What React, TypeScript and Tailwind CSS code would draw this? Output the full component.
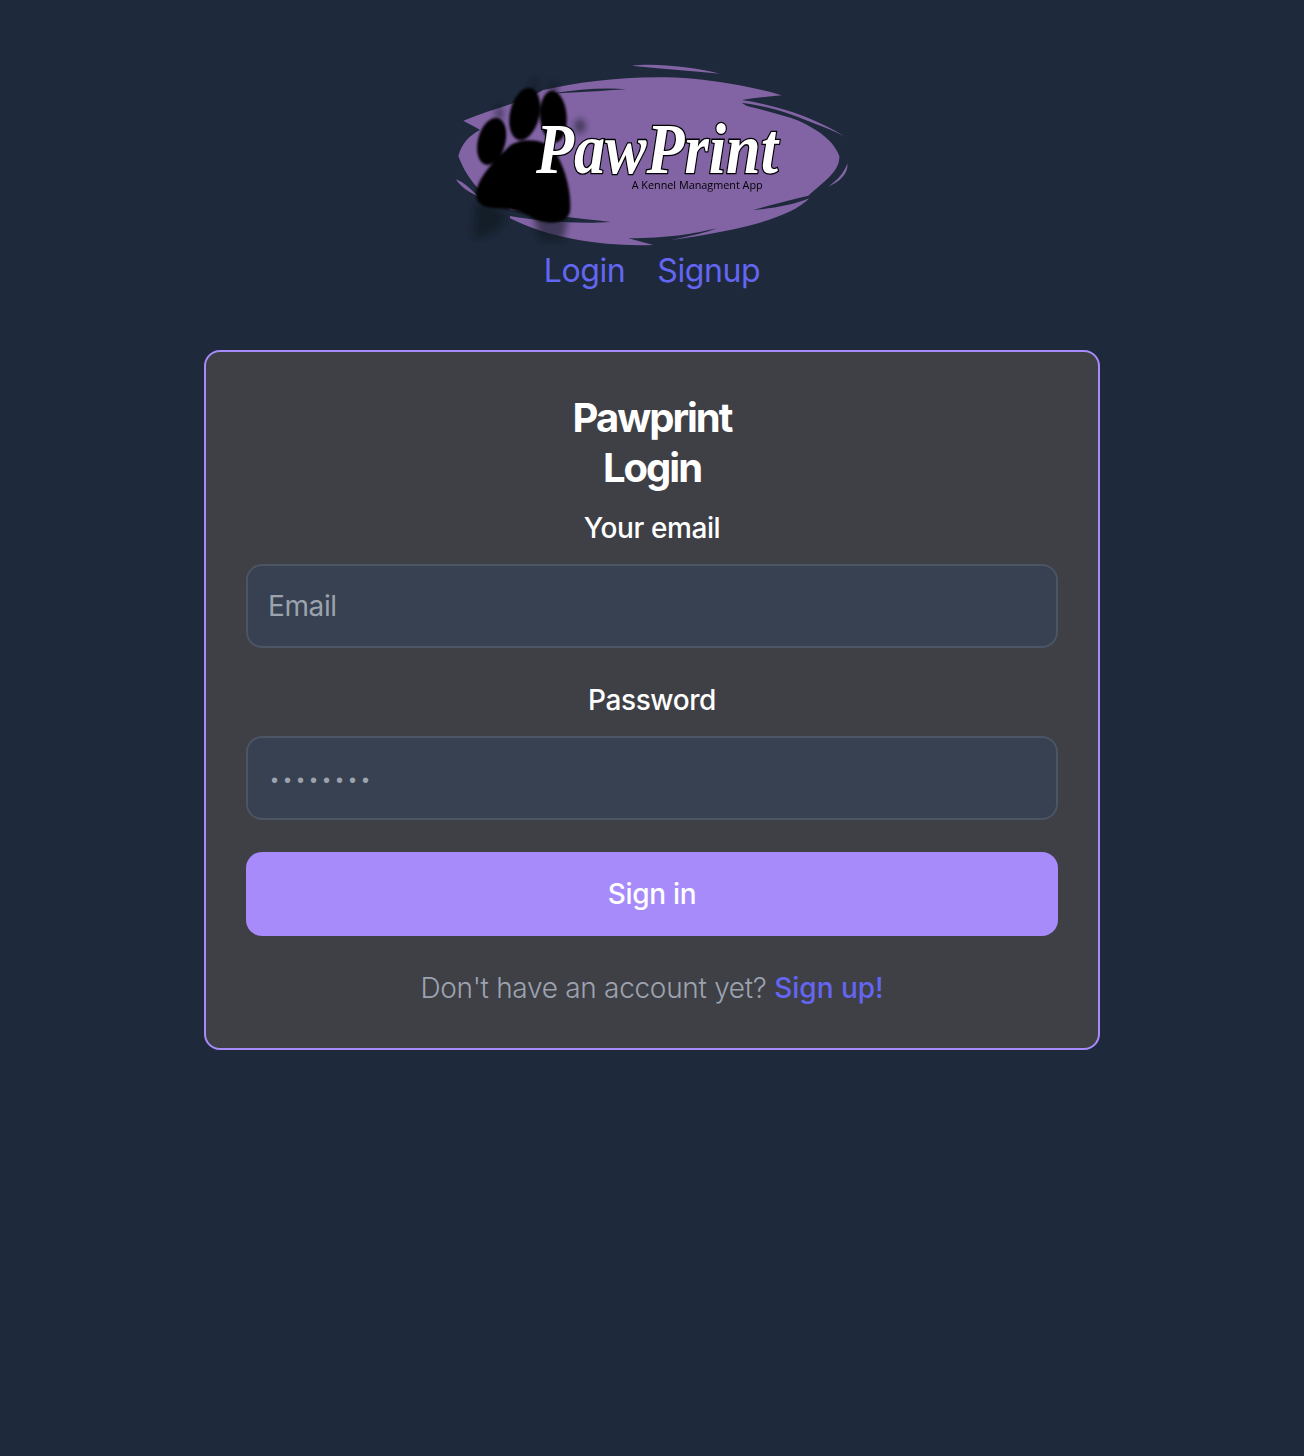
function Logo() {
  return (
    <svg viewBox="0 0 1260 600" className="w-[420px] h-[200px] block -ml-1">
      <defs>
        <filter id="soft" x="-20%" y="-20%" width="140%" height="140%">
          <feGaussianBlur stdDeviation="3" />
        </filter>
        <filter id="softer" x="-40%" y="-40%" width="180%" height="180%">
          <feGaussianBlur stdDeviation="10" />
        </filter>
      </defs>
      {/* brush strokes */}
      <g fill="#8264a4">
        <path d="M575 47C640 38 760 50 840 71C760 62 650 56 575 47Z" />
        <path d="M70 212C150 178 240 160 310 120C430 92 600 72 760 86C860 96 960 116 1025 136C985 140 945 143 905 150C1010 165 1130 205 1215 260C1150 225 1040 190 925 162C1050 195 1170 240 1198 318C1200 365 1150 395 1105 437C1050 450 990 465 940 480C1000 475 1060 465 1108 445C1050 505 900 540 695 570C760 556 800 548 830 535C760 552 680 565 565 565L640 585C500 590 340 570 210 505L210 478C140 450 85 400 55 318C65 280 90 255 120 240C105 228 85 222 70 212Z" />
        <path d="M48 388C70 395 95 420 115 440C90 428 62 412 48 388Z" />
        <path d="M1222 340C1226 370 1200 395 1165 410C1190 392 1212 370 1222 340Z" />
      </g>
      <g fill="#1e293b">
        <path d="M340 130C420 118 490 112 560 118C490 122 420 128 340 130Z" />
        <path d="M905 158C990 170 1070 195 1135 228C1060 205 985 182 920 168Z" />
        <path d="M210 480C300 492 420 505 512 516C420 522 300 515 210 498Z" />
      </g>
      {/* paw */}
      <g fill="#10161f" filter="url(#softer)" opacity="0.55">
        <path d="M105 460C140 450 180 470 195 500C190 540 130 570 100 560Z" />
        <path d="M280 500L385 500L370 570L300 570Z" />
        <ellipse cx="178" cy="190" rx="10" ry="24" />
        <ellipse cx="283" cy="108" rx="12" ry="18" />
        <ellipse cx="340" cy="115" rx="14" ry="16" />
        <ellipse cx="420" cy="228" rx="16" ry="22" />
      </g>
      <g fill="#000" filter="url(#soft)">
        <ellipse cx="155" cy="274" rx="41" ry="72" transform="rotate(15 155 274)" />
        <ellipse cx="254" cy="192" rx="44" ry="80" transform="rotate(13 254 192)" />
        <ellipse cx="340" cy="200" rx="40" ry="78" transform="rotate(-4 340 200)" />
        <path d="M108 430C114 380 165 330 212 285C250 262 310 268 340 296C372 345 396 420 390 485C382 518 330 528 285 508C250 484 200 474 165 474C128 474 106 456 108 430Z" />
      </g>
      {/* wordmark */}
      <text
        x="288"
        y="368"
        textLength="726"
        lengthAdjust="spacingAndGlyphs"
        fontFamily="'Liberation Serif', serif"
        fontStyle="italic"
        fontWeight="700"
        fontSize="215"
        fill="#fff"
        stroke="#000"
        strokeWidth="8"
        paintOrder="stroke"
      >
        PawPrint
      </text>
      <text
        x="575"
        y="416"
        textLength="393"
        lengthAdjust="spacingAndGlyphs"
        fontFamily="'Open Sans', sans-serif"
        fontWeight="500"
        fontSize="33"
        fill="#000"
      >
        A Kennel Managment App
      </text>
    </svg>
  );
}

export default function App() {
  return (
    <div className="min-h-[1456px] bg-[#1e293b] font-['Inter',sans-serif] flex flex-col items-center">
      <div className="pt-[50px]">
        <Logo />
      </div>
      <nav className="flex gap-8 text-[32px] leading-[44px] tracking-[-0.4px] text-[#6366f1] mt-[-1px]">
        <a href="#">Login</a>
        <a href="#">Signup</a>
      </nav>
      <div className="mt-[57px] w-[896px] border-2 border-[#a78bfa] rounded-2xl bg-[#3f3f46] p-10">
        <h1 className="text-center text-[40px] leading-[50px] font-bold tracking-[-2px] text-white pt-px">
          Pawprint
          <br />
          Login
        </h1>
        <form className="flex flex-col gap-8 mt-[15px]">
          <div>
            <label className="block text-center text-[28px] leading-10 font-medium tracking-[-0.4px] text-white mb-4">Your email</label>
            <input
              type="email"
              placeholder="Email"
              className="block w-full h-[84px] px-5 rounded-2xl border-2 border-[#4b5563] bg-[#374151] text-[28px] tracking-[-0.4px] text-white placeholder:text-[#9ca3af] outline-none"
            />
          </div>
          <div>
            <label className="block text-center text-[28px] leading-10 font-medium tracking-[-0.4px] text-white mb-4">Password</label>
            <input
              type="password"
              placeholder="••••••••"
              className="block w-full h-[84px] pl-[23px] pr-5 pt-[5px] rounded-2xl border-2 border-[#4b5563] bg-[#374151] font-['Liberation_Sans',sans-serif] text-[20px] tracking-[6px] text-white placeholder:text-[#9ca3af] outline-none"
            />
          </div>
          <button type="button" className="h-[84px] rounded-2xl bg-[#a78bfa] text-[28px] font-medium tracking-[-0.3px] text-white">
            Sign in
          </button>
          <p className="text-center text-[28px] leading-10 font-light text-[#9ca3af] tracking-[-0.3px]">
            Don't have an account yet? <a href="#" className="font-medium tracking-normal text-[#6366f1]">Sign up!</a>
          </p>
        </form>
      </div>
    </div>
  );
}
